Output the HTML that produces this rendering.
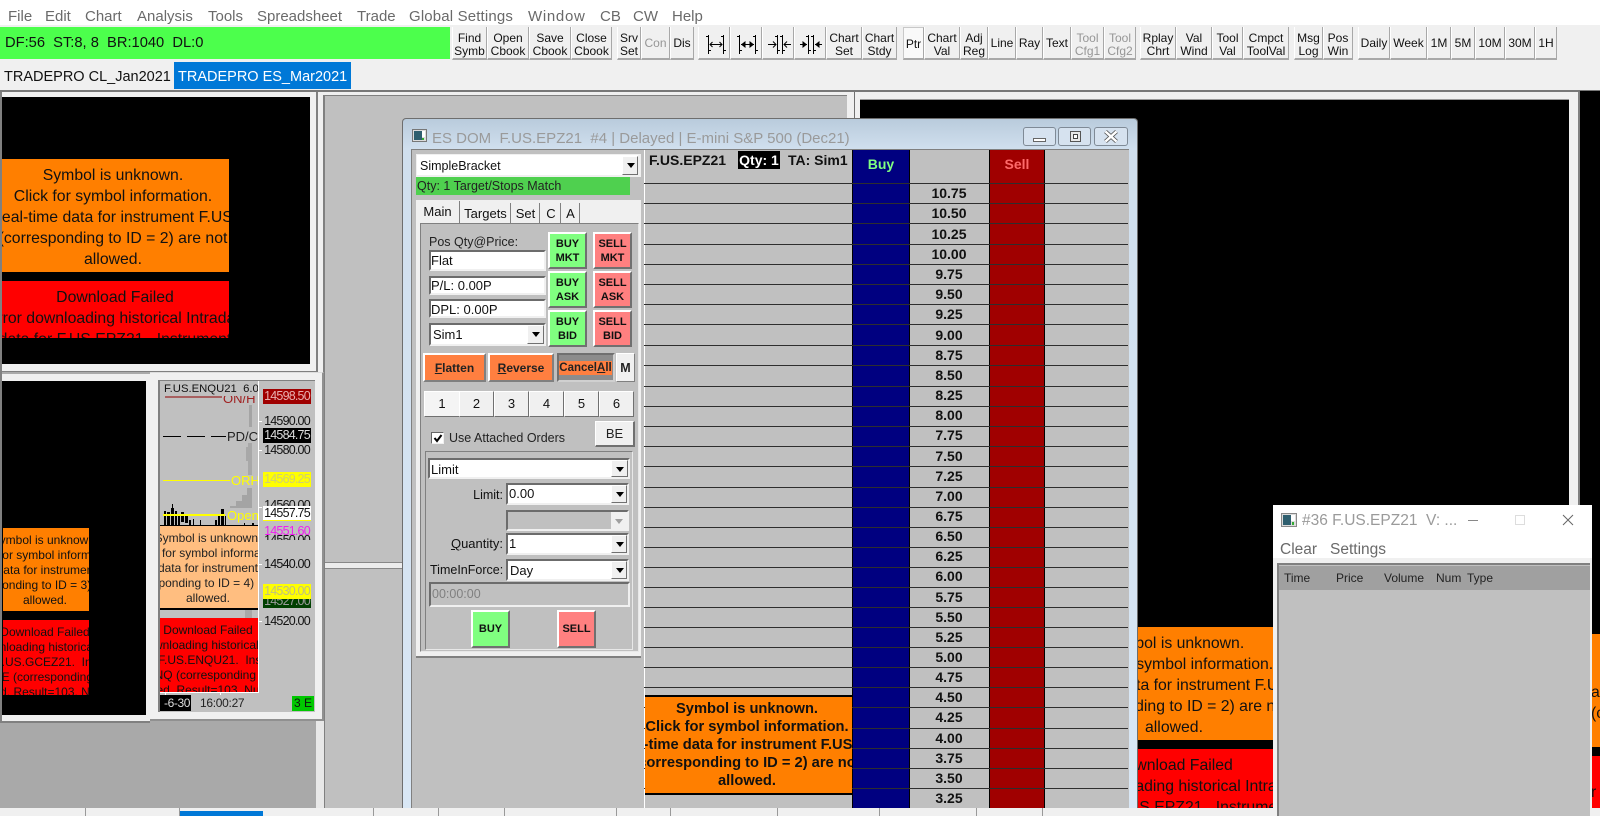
<!DOCTYPE html>
<html><head><meta charset="utf-8"><style>
html,body{margin:0;padding:0;background:#f0f0f0}
#p{position:relative;width:1600px;height:816px;overflow:hidden;background:#f0f0f0;font-family:"Liberation Sans",sans-serif;color:#000}
#p div,#p svg{position:absolute;box-sizing:border-box}
.m{top:8px;font-size:15px;color:#6a6a6a;white-space:pre;line-height:18px}
.b{top:27px;height:33px;background:#f0f0f0;border-left:1px solid #fff;border-right:1px solid #a8a8a8;border-bottom:2px solid #a8a8a8;font-size:12px;line-height:13px;text-align:center;padding-top:5px;color:#111}
.b1{line-height:33px;padding-top:0}
.dis{color:#969696}
.t{white-space:pre}
.cl{overflow:hidden;color:#111}
.cl div{white-space:pre;text-align:center}
.cl span{position:relative}
.f{background:#fff;border:2px solid;border-color:#6c6c6c #f0f0f0 #f0f0f0 #6c6c6c;font-size:13px;line-height:18px;padding-left:0;white-space:pre;color:#111}
.cb{background:#f0f0f0;border-left:1px solid #fff;border-top:1px solid #fff;border-right:1px solid #707070;border-bottom:1px solid #707070}
.cb:after{content:"";position:absolute;left:4px;top:6px;border:4px solid transparent;border-top:5px solid #000;border-bottom:0}
.ob{border:2px solid;border-color:#fff #707070 #707070 #fff;font-size:11px;font-weight:bold;line-height:14px;text-align:center;color:#111}
.gr{background:#80ff80}.rd{background:#ff8080}
.or{background:#ff7f40;border:2px solid;border-color:#fff #808080 #808080 #fff;font-size:12px;font-weight:bold;text-align:center;line-height:27px;color:#222}
.n{top:391px;width:35px;height:26px;background:#f0f0f0;border:1px solid;border-color:#fff #707070 #707070 #fff;font-size:13px;text-align:center;line-height:24px;color:#111}
.l{left:644px;width:484px;height:1px;background:#2e2e2e}
.pr{left:909px;width:80px;text-align:center;font-size:14px;font-weight:bold;line-height:20px;color:#111}
.q{font-size:12.5px;letter-spacing:-.8px;left:263px;width:48px;height:15px;line-height:15px;text-align:center;color:#111;white-space:pre}
.s{font-size:12px;line-height:15px;color:#222}
.tb{font-size:13px;color:#111;text-align:center;white-space:pre}
</style></head><body><div id="p">

<!-- menu -->
<div style="left:0;top:0;width:1600px;height:25px;background:#fff"></div>
<div class="m" style="left:8px">File</div><div class="m" style="left:45px">Edit</div><div class="m" style="left:85px">Chart</div><div class="m" style="left:137px">Analysis</div><div class="m" style="left:208px">Tools</div><div class="m" style="left:257px">Spreadsheet</div><div class="m" style="left:357px">Trade</div><div class="m" style="left:409px;letter-spacing:.15px">Global Settings</div><div class="m" style="left:528px;letter-spacing:.7px">Window</div><div class="m" style="left:600px">CB</div><div class="m" style="left:633px">CW</div><div class="m" style="left:672px">Help</div>

<!-- status -->
<div class="t" style="left:0;top:27px;width:450px;height:32px;background:#4cff4c;font-size:14.7px;line-height:33px;padding-left:5px;color:#111">DF:56  ST:8, 8  BR:1040  DL:0</div>

<!-- toolbar -->
<div class="b" style="left:452px;width:35px">Find<br>Symb</div>
<div class="b" style="left:487px;width:42px">Open<br>Cbook</div>
<div class="b" style="left:529px;width:42px">Save<br>Cbook</div>
<div class="b" style="left:571px;width:41px">Close<br>Cbook</div>
<div class="b" style="left:617px;width:24px">Srv<br>Set</div>
<div class="b b1 dis" style="left:641px;width:29px">Con</div>
<div class="b b1" style="left:670px;width:24px">Dis</div>
<div class="b" style="left:698px;width:32px"></div><div class="b" style="left:730px;width:32px"></div><div class="b" style="left:762px;width:32px"></div><div class="b" style="left:794px;width:32px"></div>
<svg style="left:695px;top:25px" width="135" height="40" viewBox="695 25 135 40" fill="none" stroke="#000" stroke-width="1">
<path d="M708.5 35V54M706 36.5H708.5M708.5 50.5H711M723.5 35V54M721 36.5H723.5M723.5 50.5H726M710 44.5H722M712.5 42L710 44.5L712.5 47M719.5 42L722 44.5L719.5 47"/>
<path d="M739.5 35V54M737 36.5H739.5M739.5 50.5H742M755.5 35V54M753 36.5H755.5M755.5 50.5H758M741 44.5H754"/><path d="M741 44.5L745.5 41V48ZM754 44.5L749.5 41V48Z" fill="#000" stroke="none"/>
<path d="M777.5 35V54M775 36.5H777.5M777.5 50.5H780M782.5 35V54M780 36.5H782.5M782.5 50.5H785M768 44.5H776M773 41.5L776 44.5L773 47.5M791 44.5H784M787 41.5L784 44.5L787 47.5"/>
<path d="M808.5 35V54M806 36.5H808.5M808.5 50.5H811M813.5 35V54M811 36.5H813.5M813.5 50.5H816M800 44.5H807M822 44.5H815"/><path d="M807 44.5L802.5 41V48ZM815 44.5L819.5 41V48Z" fill="#000" stroke="none"/>
</svg>
<div class="b" style="left:826px;width:36px">Chart<br>Set</div>
<div class="b" style="left:862px;width:35px">Chart<br>Stdy</div>
<div class="b b1" style="left:903px;width:21px;background:#f9f9f9;border-top:1px solid #c8c8c8;border-left:1px solid #c8c8c8">Ptr</div>
<div class="b" style="left:924px;width:36px">Chart<br>Val</div>
<div class="b" style="left:960px;width:28px">Adj<br>Reg</div>
<div class="b b1" style="left:988px;width:28px">Line</div>
<div class="b b1" style="left:1016px;width:27px">Ray</div>
<div class="b b1" style="left:1043px;width:28px">Text</div>
<div class="b dis" style="left:1071px;width:33px">Tool<br>Cfg1</div>
<div class="b dis" style="left:1104px;width:32px">Tool<br>Cfg2</div>
<div class="b" style="left:1140px;width:36px">Rplay<br>Chrt</div>
<div class="b" style="left:1176px;width:36px">Val<br>Wind</div>
<div class="b" style="left:1212px;width:31px">Tool<br>Val</div>
<div class="b" style="left:1243px;width:46px">Cmpct<br>ToolVal</div>
<div class="b" style="left:1294px;width:29px">Msg<br>Log</div>
<div class="b" style="left:1323px;width:30px">Pos<br>Win</div>
<div class="b b1" style="left:1358px;width:32px">Daily</div>
<div class="b b1" style="left:1390px;width:37px">Week</div>
<div class="b b1" style="left:1427px;width:24px">1M</div>
<div class="b b1" style="left:1451px;width:24px">5M</div>
<div class="b b1" style="left:1475px;width:30px">10M</div>
<div class="b b1" style="left:1505px;width:30px">30M</div>
<div class="b b1" style="left:1535px;width:22px">1H</div>

<!-- tabs -->
<div class="t" style="left:0;top:62px;width:173px;height:27px;font-size:14.5px;line-height:30px;padding-left:4px;color:#111">TRADEPRO CL_Jan2021</div>
<div class="t" style="left:174px;top:62px;width:177px;height:27px;background:#0078d7;font-size:14.5px;line-height:30px;padding-left:4px;color:#fff">TRADEPRO ES_Mar2021</div>

<!-- MDI -->
<div style="left:0;top:90px;width:1600px;height:718px;background:#a9a9a9;border-top:2px solid #787878"></div>

<!-- window 2 -->
<div style="left:318px;top:92px;width:545px;height:716px;background:#f0f0f0"></div>
<div style="left:323px;top:95px;width:524px;height:713px;background:#c0c0c0;border-top:1px solid #808080;border-left:2px solid #808080"></div>
<div style="left:325px;top:562px;width:80px;height:7px;background:#ececec;border-top:1px solid #888;border-bottom:1px solid #888"></div>
<div style="left:854px;top:92px;width:1px;height:716px;background:#707070"></div>

<!-- right charts -->
<div style="left:855px;top:92px;width:725px;height:716px;background:#f0f0f0"></div>
<div style="left:860px;top:99px;width:709px;height:709px;background:#000;border-top:1px solid #999"></div>
<div style="left:1578px;top:92px;width:2px;height:716px;background:#808080"></div>
<div style="left:1580px;top:91px;width:20px;height:717px;background:#000"></div>
<div class="cl" style="left:1137px;top:627px;width:136px;height:113px;background:#ff7f00;font-size:15.8px;line-height:21px">
<div style="left:-163px;top:6px;width:400px">Symbol is unknown.
Click for symbol information.
<span style="left:20px">Real-time data for instrument F.US.EPZ21</span>
(corresponding to ID = 2) are not
allowed.</div></div>
<div class="cl" style="left:1137px;top:749px;width:136px;height:59px;background:#f00;font-size:15.8px;line-height:21px">
<div style="left:-163px;top:6px;width:400px">Download Failed
Error downloading historical Intraday
data for F.US.EPZ21.  Instrument</div></div>
<div class="cl" style="left:1592px;top:634px;width:8px;height:113px;background:#ff7f00;font-size:15.8px;line-height:21px"><div style="left:-1px;top:48px;width:12px;text-align:left">a
(c</div></div>
<div class="cl" style="left:1592px;top:756px;width:8px;height:52px;background:#f00;font-size:15.8px;line-height:21px"><div style="left:-1px;top:26px;width:12px;text-align:left">r</div></div>

<!-- left chart 1 -->
<div style="left:0;top:92px;width:318px;height:281px;background:#f0f0f0;border-bottom:2px solid #808080;border-right:2px solid #808080"></div>
<div style="left:0;top:92px;width:2px;height:281px;background:#808080"></div>
<div style="left:2px;top:97px;width:308px;height:267px;background:#000"></div>
<div class="cl" style="left:2px;top:159px;width:227px;height:113px;background:#ff7f00;font-size:15.8px;line-height:21px">
<div style="left:-189px;top:6px;width:600px">Symbol is unknown.
Click for symbol information.
<span style="left:25px">Real-time data for instrument F.US.EPZ21</span>
(corresponding to ID = 2) are not
allowed.</div></div>
<div class="cl" style="left:2px;top:281px;width:227px;height:57px;background:#f00;font-size:15.8px;line-height:21px">
<div style="left:-187px;top:6px;width:600px">Download Failed
Error downloading historical Intraday
data for F.US.EPZ21.  Instrument</div></div>

<!-- left chart 2 -->
<div style="left:0;top:372px;width:150px;height:351px;background:#f0f0f0;border-top:2px solid #aaa;border-bottom:2px solid #808080"></div>
<div style="left:0;top:372px;width:2px;height:351px;background:#808080"></div>
<div style="left:2px;top:381px;width:144px;height:334px;background:#000"></div>
<div class="cl" style="left:3px;top:528px;width:86px;height:83px;background:#ff7f00;font-size:12px;line-height:15px">
<div style="left:-158px;top:5px;width:400px">Symbol is unknown.
Click for symbol information.
<span style="left:14px">Real-time data for instrument F.US.GCEZ21</span>
(corresponding to ID = 3) are not
allowed.</div></div>
<div class="cl" style="left:3px;top:620px;width:86px;height:75px;background:#f00;font-size:12px;line-height:15px">
<div style="left:-158px;top:5px;width:400px">Download Failed
Error downloading historical Intraday
data for F.US.GCEZ21.  Instrument
GCE (corresponding to
allowed. Result=103. Number</div></div>

<!-- chart 3 floating -->
<div style="left:150px;top:372px;width:174px;height:349px;background:#f0f0f0;border-right:2px solid #909090;border-bottom:2px solid #909090;border-top:1px solid #ddd"></div>
<div style="left:158px;top:380px;width:157px;height:332px;background:#c0c0c0;border-left:2px solid #808080;border-top:1px solid #808080"></div>
<div style="left:258px;top:381px;width:1px;height:312px;background:#fff"></div>
<svg style="left:160px;top:381px" width="98" height="146" viewBox="160 381 98 146">
<rect x="249" y="405" width="3" height="22" fill="#a4a4a4"/>
<rect x="248" y="443" width="4" height="32" fill="#a8a8a8"/><rect x="246" y="447" width="6" height="14" fill="#a8a8a8"/>
<rect x="247" y="488" width="5" height="20" fill="#a4a4a4"/><rect x="242" y="495" width="10" height="10" fill="#a4a4a4"/><rect x="236" y="501" width="16" height="6" fill="#a4a4a4"/><rect x="230" y="506" width="22" height="2" fill="#a4a4a4"/>
<path d="M165 397H222" stroke="#900000" stroke-width="1"/>
<text x="223" y="403" font-size="13" fill="#a02020" font-family="Liberation Sans">ON/H</text>
<path d="M163 436.5H181M187 436.5H205M211 436.5H226" stroke="#000"/>
<text x="227" y="441" font-size="13" fill="#222" font-family="Liberation Sans">PD/C</text>
<path d="M163 480.5H230" stroke="#ffff00"/>
<text x="231" y="485" font-size="13" fill="#ffff00" font-family="Liberation Sans">ORH</text>
<g fill="#000"><rect x="164" y="511" width="2" height="14"/><rect x="167" y="512" width="3" height="13"/><rect x="171" y="508" width="3" height="17"/><rect x="172" y="504" width="1" height="4"/><rect x="175" y="511" width="2" height="14"/><rect x="178" y="514" width="2" height="11"/><rect x="181" y="512" width="3" height="10"/><rect x="185" y="514" width="3" height="9"/><rect x="189" y="520" width="2" height="5"/><rect x="193" y="519" width="1" height="6"/><rect x="200" y="520" width="1" height="5"/><rect x="215" y="520" width="2" height="5"/><rect x="218" y="516" width="2" height="9"/><rect x="221" y="509" width="3" height="16"/><rect x="225" y="516" width="1" height="9"/><rect x="244" y="523" width="1" height="2"/><rect x="252" y="523" width="2" height="2"/></g>
<path d="M163 515H225" stroke="#ffff00" stroke-width="2"/>
<text x="227" y="520" font-size="13" fill="#ffff00" font-family="Liberation Sans">Open</text>
<path d="M160 525.5H258" stroke="#000"/>
</svg>
<div style="left:160px;top:381px;width:98px;height:15px;background:#c0c0c0;overflow:hidden"><div class="t" style="left:4px;top:1px;font-size:11.3px;line-height:14px;color:#111">F.US.ENQU21  6.00</div></div>
<div class="cl" style="left:160px;top:526px;width:98px;height:84px;background:#ffbe80;border-bottom:2px solid #000;font-size:12px;line-height:15px">
<div style="left:-152px;top:5px;width:400px;color:#222">Symbol is unknown.
Click for symbol information.
<span style="left:13px">Real-time data for instrument F.US.ENQU21</span>
(corresponding to ID = 4) are not
allowed.</div></div>
<div style="left:245px;top:610px;width:7px;height:8px;background:#a8a8a8"></div>
<div class="cl" style="left:160px;top:618px;width:98px;height:74px;background:#f00;font-size:12px;line-height:15px">
<div style="left:-152px;top:5px;width:400px">Download Failed
Error downloading historical Intraday
data for F.US.ENQU21.  Instrument
ENQ (corresponding to
allowed. Result=103. Number</div></div>
<div style="left:160px;top:692px;width:99px;height:1px;background:#fff"></div>
<div style="left:165px;top:693px;width:1px;height:2px;background:#fff"></div><div style="left:220px;top:693px;width:1px;height:2px;background:#fff"></div>
<div style="left:259px;top:421px;width:3px;height:1px;background:#fff"></div><div style="left:259px;top:450px;width:3px;height:1px;background:#fff"></div><div style="left:259px;top:507px;width:3px;height:1px;background:#fff"></div><div style="left:259px;top:564px;width:3px;height:1px;background:#fff"></div><div style="left:259px;top:621px;width:3px;height:1px;background:#fff"></div>
<div class="q" style="top:389px;background:#a00000;color:#e8b0b0">14598.50</div>
<div class="q" style="top:414px">14590.00</div>
<div class="q" style="top:428px;background:#000;color:#ddd">14584.75</div>
<div class="q" style="top:443px">14580.00</div>
<div class="q" style="top:472px;background:#ff0;color:#d0d070">14569.25</div>
<div class="q" style="top:498px">14560.00</div>
<div class="q" style="top:506px;background:#fff;border-bottom:1px solid #ff0">14557.75</div>
<div class="q" style="top:530px;height:10px;overflow:hidden;line-height:20px">14550.00</div>
<div class="q" style="top:524px;color:#f020f0">14551.60</div>
<div class="q" style="top:557px">14540.00</div>
<div class="q" style="top:598px;height:10px;background:#004000;color:#9c9c9c;line-height:6px;overflow:hidden">14527.00</div>
<div class="q" style="top:584px;background:#ff0;color:#c0c080">14530.00</div>
<div class="q" style="top:614px">14520.00</div>
<div class="t" style="left:160px;top:695px;width:31px;height:16px;background:#000;color:#ddd;font-size:12px;line-height:16px;text-align:right;padding-right:1px;letter-spacing:-.4px">-6-30</div>
<div class="t" style="left:200px;top:695px;font-size:12px;line-height:16px;color:#222;letter-spacing:-.3px">16:00:27</div>
<div class="t" style="left:292px;top:696px;width:22px;height:15px;background:#00c800;font-size:12px;line-height:15px;text-align:center;color:#111">3 E</div>

<!-- lower-left column -->
<div style="left:316px;top:721px;width:8px;height:87px;background:#e8e8e8"></div>

<!-- DOM window -->
<div style="left:402px;top:118px;width:736px;height:690px;background:linear-gradient(#b9cbdc 0,#d0dfee 30px,#d9e7f5 100%);border:1px solid #6e6e6e;border-bottom:0;border-radius:4px 4px 0 0"></div>
<svg style="left:412px;top:129px" width="15" height="13"><rect x=".5" y=".5" width="14" height="12" fill="#dcdcdc" stroke="#777"/><rect x="2" y="2" width="8" height="9" fill="#2f5f6f"/><rect x="10" y="2" width="3" height="6" fill="#fff"/><rect x="10" y="9" width="2" height="2" fill="#3a3"/></svg>
<div class="t" style="left:432px;top:129px;font-size:15px;line-height:19px;color:#9a9a9a">ES DOM  F.US.EPZ21  #4 | Delayed | E-mini S&amp;P 500 (Dec21)</div>
<div style="left:1023px;top:127px;width:33px;height:19px;border:1px solid #7f8a96;border-radius:3px;background:#d6e2ef"><div style="left:9px;top:10px;width:13px;height:4px;background:#fff;border:1px solid #666"></div></div>
<div style="left:1058px;top:127px;width:33px;height:19px;border:1px solid #7f8a96;border-radius:3px;background:#d6e2ef"><div style="left:11px;top:3px;width:11px;height:11px;background:#e8e8e8;border:1px solid #555"><div style="left:2px;top:2px;width:5px;height:5px;border:1px solid #444;background:#fff"></div></div></div>
<div style="left:1094px;top:127px;width:34px;height:19px;border:1px solid #7f8a96;border-radius:3px;background:#d6e2ef"></div>
<svg style="left:1104px;top:130px" width="14" height="13"><path d="M1.5 1.5L12.5 11.5M12.5 1.5L1.5 11.5" stroke="#555" stroke-width="4"/><path d="M1.5 1.5L12.5 11.5M12.5 1.5L1.5 11.5" stroke="#fff" stroke-width="2.5"/></svg>
<div style="left:411px;top:149px;width:718px;height:659px;background:#c0c0c0;border-top:1px solid #808080;border-left:1px solid #808080"></div>

<!-- ladder -->
<div style="left:644px;top:150px;width:1px;height:658px;background:#fff"></div>
<div class="t" style="left:649px;top:151px;font-size:14px;font-weight:bold;line-height:18px;color:#111">F.US.EPZ21</div>
<div class="t" style="left:738px;top:151px;width:42px;height:18px;background:#000;color:#fff;font-size:14px;font-weight:bold;line-height:18px;text-align:center">Qty: 1</div>
<div class="t" style="left:788px;top:151px;font-size:14px;font-weight:bold;line-height:18px;color:#111">TA: Sim1</div>
<div style="left:852px;top:150px;width:58px;height:658px;background:#000080;border-left:1px solid #000;border-right:1px solid #000"></div>
<div style="left:989px;top:150px;width:56px;height:658px;background:#a00000;border-left:1px solid #000;border-right:1px solid #000"></div>
<div style="left:852px;top:155px;width:58px;text-align:center;font-size:14px;font-weight:bold;line-height:18px;color:#80ff80">Buy</div>
<div style="left:989px;top:155px;width:56px;text-align:center;font-size:14px;font-weight:bold;line-height:18px;color:#ff6a6a">Sell</div>

<div class="l" style="top:183px"></div><div class="pr" style="top:183px">10.75</div>
<div class="l" style="top:203px"></div><div class="pr" style="top:203px">10.50</div>
<div class="l" style="top:223px"></div><div class="pr" style="top:224px">10.25</div>
<div class="l" style="top:244px"></div><div class="pr" style="top:244px">10.00</div>
<div class="l" style="top:264px"></div><div class="pr" style="top:264px">9.75</div>
<div class="l" style="top:284px"></div><div class="pr" style="top:284px">9.50</div>
<div class="l" style="top:304px"></div><div class="pr" style="top:304px">9.25</div>
<div class="l" style="top:324px"></div><div class="pr" style="top:325px">9.00</div>
<div class="l" style="top:345px"></div><div class="pr" style="top:345px">8.75</div>
<div class="l" style="top:365px"></div><div class="pr" style="top:365px">8.50</div>
<div class="l" style="top:386px"></div><div class="pr" style="top:385px">8.25</div>
<div class="l" style="top:406px"></div><div class="pr" style="top:405px">8.00</div>
<div class="l" style="top:426px"></div><div class="pr" style="top:425px">7.75</div>
<div class="l" style="top:446px"></div><div class="pr" style="top:446px">7.50</div>
<div class="l" style="top:466px"></div><div class="pr" style="top:466px">7.25</div>
<div class="l" style="top:487px"></div><div class="pr" style="top:486px">7.00</div>
<div class="l" style="top:507px"></div><div class="pr" style="top:506px">6.75</div>
<div class="l" style="top:527px"></div><div class="pr" style="top:526px">6.50</div>
<div class="l" style="top:547px"></div><div class="pr" style="top:546px">6.25</div>
<div class="l" style="top:567px"></div><div class="pr" style="top:566px">6.00</div>
<div class="l" style="top:587px"></div><div class="pr" style="top:587px">5.75</div>
<div class="l" style="top:607px"></div><div class="pr" style="top:607px">5.50</div>
<div class="l" style="top:627px"></div><div class="pr" style="top:627px">5.25</div>
<div class="l" style="top:647px"></div><div class="pr" style="top:647px">5.00</div>
<div class="l" style="top:667px"></div><div class="pr" style="top:667px">4.75</div>
<div class="l" style="top:687px"></div><div class="pr" style="top:687px">4.50</div>
<div class="l" style="top:707px"></div><div class="pr" style="top:707px">4.25</div>
<div class="l" style="top:728px"></div><div class="pr" style="top:728px">4.00</div>
<div class="l" style="top:748px"></div><div class="pr" style="top:748px">3.75</div>
<div class="l" style="top:768px"></div><div class="pr" style="top:768px">3.50</div>
<div class="l" style="top:788px"></div><div class="pr" style="top:788px">3.25</div>

<div class="cl" style="left:645px;top:695px;width:207px;height:100px;background:#ff7f00;border-top:2px solid #000;border-bottom:2px solid #000;font-size:14.7px;font-weight:bold;line-height:18px">
<div style="left:-148px;top:3px;width:500px;color:#111">Symbol is unknown.
Click for symbol information.
<span style="left:10px">Real-time data for instrument F.US.EPZ21</span>
(corresponding to ID = 2) are not
allowed.</div></div>

<!-- order panel -->
<div style="left:416px;top:154px;width:225px;height:23px;background:#f0f0f0"></div>
<div class="t" style="left:417px;top:155px;width:221px;height:20px;background:#fff;font-size:12.5px;line-height:22px;padding-left:3px;color:#111">SimpleBracket</div>
<div class="cb" style="left:622px;top:156px;width:16px;height:19px"></div>
<div class="t" style="left:416px;top:177px;width:214px;height:18px;background:#4fd04f;font-size:12.5px;line-height:18px;padding-left:1px;color:#222">Qty: 1 Target/Stops Match</div>
<div style="left:416px;top:200px;width:225px;height:458px;background:#f0f0f0;border-bottom:2px solid #808080"></div>
<div class="tb" style="left:416px;top:201px;width:44px;height:22px;background:#f0f0f0;border-right:1px solid #808080;line-height:22px">Main</div>
<div class="tb" style="left:461px;top:203px;width:50px;height:20px;background:#f0f0f0;border-right:1px solid #808080;line-height:22px">Targets</div>
<div class="tb" style="left:512px;top:203px;width:28px;height:20px;border-right:1px solid #808080;line-height:22px">Set</div>
<div class="tb" style="left:542px;top:203px;width:19px;height:20px;border-right:1px solid #808080;line-height:22px">C</div>
<div class="tb" style="left:562px;top:203px;width:18px;height:20px;border-right:1px solid #808080;line-height:22px">A</div>
<div style="left:420px;top:223px;width:219px;height:429px;background:#c0c0c0;border-top:1px solid #808080;border-left:1px solid #808080;border-right:1px solid #e8e8e8;border-bottom:1px solid #e8e8e8"></div>
<div class="t" style="left:429px;top:234px;font-size:12.5px;line-height:16px;color:#222">Pos Qty@Price:</div>
<div class="f" style="left:429px;top:250px;width:117px;height:21px;line-height:18px">Flat</div>
<div class="f" style="left:429px;top:276px;width:117px;height:19px;line-height:15px">P/L: 0.00P</div>
<div class="f" style="left:429px;top:299px;width:117px;height:19px;line-height:17px">DPL: 0.00P</div>
<div class="f" style="left:429px;top:323px;width:117px;height:23px;line-height:20px;padding-left:2px">Sim1</div>
<div class="cb" style="left:527px;top:325px;width:17px;height:19px"></div>

<div class="ob gr" style="left:548px;top:232px;width:39px;height:37px;padding-top:3px">BUY<br>MKT</div>
<div class="ob gr" style="left:548px;top:271px;width:39px;height:37px;padding-top:3px">BUY<br>ASK</div>
<div class="ob gr" style="left:548px;top:310px;width:39px;height:37px;padding-top:3px">BUY<br>BID</div>
<div class="ob rd" style="left:593px;top:232px;width:39px;height:37px;padding-top:3px">SELL<br>MKT</div>
<div class="ob rd" style="left:593px;top:271px;width:39px;height:37px;padding-top:3px">SELL<br>ASK</div>
<div class="ob rd" style="left:593px;top:310px;width:39px;height:37px;padding-top:3px">SELL<br>BID</div>

<div class="or" style="left:423px;top:353px;width:63px;height:29px"><u>F</u>latten</div>
<div class="or" style="left:488px;top:353px;width:66px;height:29px"><u>R</u>everse</div>
<div style="left:557px;top:353px;width:58px;height:29px;background:#8c8c8c;border:2px solid;border-color:#707070 #d0d0d0 #d0d0d0 #707070"></div>
<div style="left:559px;top:361px;width:53px;height:14px;background:#ff7f40;font-size:11.5px;font-weight:bold;line-height:14px;text-align:center;color:#222;white-space:nowrap">Cancel<u>A</u>ll</div>
<div style="left:616px;top:353px;width:19px;height:29px;background:#f0f0f0;border:1px solid;border-color:#fff #808080 #808080 #fff;font-size:12.5px;font-weight:bold;text-align:center;line-height:29px;color:#222">M</div>

<div class="n" style="left:424px;background:#f4f4f4;border-right:0">1</div><div class="n" style="left:459px">2</div><div class="n" style="left:494px">3</div><div class="n" style="left:529px">4</div><div class="n" style="left:564px">5</div><div class="n" style="left:599px">6</div>

<div style="left:431px;top:432px;width:13px;height:12px;background:#fff;border:1px solid;border-color:#666 #f0f0f0 #f0f0f0 #666"></div>
<svg style="left:432px;top:433px" width="12" height="11"><path d="M2.5 5L5 8L9.5 2" fill="none" stroke="#000" stroke-width="2"/></svg>
<div class="t" style="left:449px;top:430px;font-size:12.5px;line-height:16px;color:#222">Use Attached Orders</div>
<div style="left:595px;top:421px;width:40px;height:26px;background:#f0f0f0;border:1px solid;border-color:#fff #707070 #707070 #fff;border-width:1px 2px 2px 1px;font-size:13px;text-align:center;line-height:24px;color:#222">BE</div>

<div style="left:425px;top:451px;width:208px;height:199px;background:#c0c0c0;border:1px solid;border-color:#808080 #e8e8e8 #e8e8e8 #808080"></div>
<div class="f" style="left:428px;top:458px;width:202px;height:21px;padding-left:1px;line-height:19px">Limit</div>
<div class="cb" style="left:611px;top:460px;width:17px;height:17px"></div>
<div class="t" style="left:440px;top:487px;width:63px;text-align:right;font-size:12.5px;line-height:16px;color:#111">Limit:</div>
<div class="f" style="left:506px;top:483px;width:123px;height:22px;padding-left:1px">0.00</div>
<div class="cb" style="left:611px;top:485px;width:16px;height:18px"></div>
<div style="left:506px;top:510px;width:123px;height:21px;background:#c0c0c0;border:2px solid;border-color:#6c6c6c #f0f0f0 #f0f0f0 #6c6c6c"></div>
<div style="left:611px;top:512px;width:16px;height:17px;background:#f0f0f0"></div>
<div style="left:615px;top:519px;border:4px solid transparent;border-top:5px solid #a0a0a0;border-bottom:0"></div>
<div class="t" style="left:440px;top:536px;width:63px;text-align:right;font-size:13px;line-height:16px;color:#111"><u>Q</u>uantity:</div>
<div class="f" style="left:506px;top:533px;width:123px;height:22px;padding-left:1px">1</div>
<div class="cb" style="left:611px;top:535px;width:16px;height:18px"></div>
<div class="t" style="left:430px;top:562px;font-size:12.5px;line-height:16px;color:#111">TimeInForce:</div>
<div class="f" style="left:506px;top:559px;width:123px;height:22px;padding-left:2px;line-height:20px">Day</div>
<div class="cb" style="left:611px;top:561px;width:16px;height:18px"></div>
<div class="t" style="left:429px;top:582px;width:201px;height:25px;background:#c0c0c0;border:2px solid;border-color:#6c6c6c #f0f0f0 #f0f0f0 #6c6c6c;font-size:12.5px;line-height:21px;padding-left:1px;color:#808080">00:00:00</div>
<div class="ob gr" style="left:471px;top:610px;width:39px;height:38px;line-height:34px">BUY</div>
<div class="ob rd" style="left:557px;top:610px;width:39px;height:38px;line-height:34px">SELL</div>

<!-- trades window -->
<div style="left:1273px;top:505px;width:319px;height:311px;background:#f0f0f0"></div>
<div style="left:1273px;top:505px;width:319px;height:53px;background:#fff"></div>
<svg style="left:1281px;top:513px" width="16" height="14"><rect x=".5" y=".5" width="15" height="13" fill="#dcdcdc" stroke="#888"/><rect x="2" y="2" width="8" height="10" fill="#2f5f6f"/><rect x="10" y="2" width="4" height="6" fill="#fff"/><rect x="11" y="9" width="2" height="3" fill="#3a3"/></svg>
<div class="t" style="left:1302px;top:511px;font-size:15.5px;line-height:19px;color:#9a9a9a">#36 F.US.EPZ21  V: ...</div>
<div style="left:1468px;top:520px;width:10px;height:1px;background:#888"></div>
<div style="left:1515px;top:515px;width:10px;height:10px;border:1px solid #ddd"></div>
<svg style="left:1562px;top:514px" width="12" height="12"><path d="M1 1L11 11M11 1L1 11" stroke="#666" fill="none"/></svg>
<div class="t" style="left:1280px;top:540px;font-size:15.5px;line-height:19px;color:#6a6a6a">Clear</div>
<div class="t" style="left:1330px;top:540px;font-size:15.5px;line-height:19px;color:#6a6a6a">Settings</div>
<div style="left:1277px;top:563px;width:313px;height:253px;background:#c0c0c0;border-top:2px solid #808080;border-left:2px solid #808080"></div>
<div style="left:1279px;top:566px;width:311px;height:24px;background:#a0a0a0"></div>
<div class="t" style="left:1284px;top:570px;font-size:12px;line-height:16px;color:#222">Time</div>
<div class="t" style="left:1336px;top:570px;font-size:12px;line-height:16px;color:#222">Price</div>
<div class="t" style="left:1384px;top:570px;font-size:12px;line-height:16px;color:#222">Volume</div>
<div class="t" style="left:1436px;top:570px;font-size:12px;line-height:16px;color:#222">Num</div>
<div class="t" style="left:1467px;top:570px;font-size:12px;line-height:16px;color:#222">Type</div>

<!-- bottom strip -->
<div style="left:0;top:808px;width:1273px;height:8px;background:#f0f0f0"></div>
<div style="left:1592px;top:808px;width:8px;height:8px;background:#f0f0f0"></div>
<div style="left:179px;top:811px;width:84px;height:5px;background:#0078d7"></div>
<div style="left:85px;top:808px;width:1px;height:8px;background:#999"></div><div style="left:179px;top:808px;width:1px;height:8px;background:#999"></div><div style="left:373px;top:808px;width:1px;height:8px;background:#999"></div><div style="left:438px;top:808px;width:1px;height:8px;background:#999"></div><div style="left:504px;top:808px;width:1px;height:8px;background:#999"></div><div style="left:616px;top:808px;width:1px;height:8px;background:#999"></div><div style="left:670px;top:808px;width:1px;height:8px;background:#999"></div><div style="left:777px;top:808px;width:1px;height:8px;background:#999"></div><div style="left:879px;top:808px;width:1px;height:8px;background:#999"></div><div style="left:976px;top:808px;width:1px;height:8px;background:#999"></div><div style="left:1042px;top:808px;width:1px;height:8px;background:#999"></div>
</div></body></html>
